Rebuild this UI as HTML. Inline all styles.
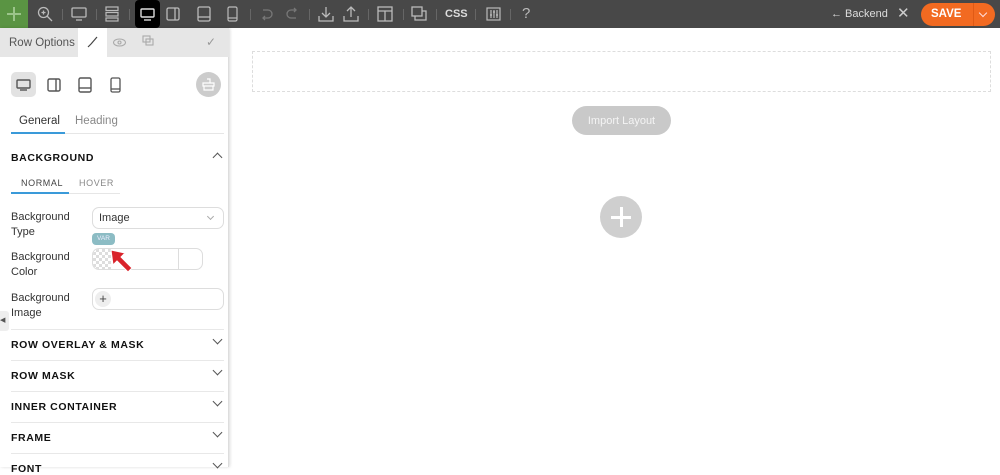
<!DOCTYPE html><html><head><style>
*{box-sizing:border-box;margin:0;padding:0}
body{width:1000px;height:467px;overflow:hidden;background:#fff;font-family:"Liberation Sans",Arial,sans-serif;position:relative}
.tb{position:absolute;left:0;top:0;width:1000px;height:28px;background:#484848}
.ab{position:absolute}
.sep{position:absolute;top:9px;width:1px;height:11px;background:#666}
.panel{position:absolute;left:0;top:28px;width:229px;height:439px;background:#fff;border-right:1px solid #ddd;box-shadow:1px 0 3px rgba(0,0,0,.15)}
.t{position:absolute;font-size:11px;color:#333}
.h{position:absolute;left:11px;font-size:10.5px;font-weight:bold;letter-spacing:.6px;color:#111}
.ln{position:absolute;left:11px;width:213px;height:1px;background:#e8e8e8}
.chev{position:absolute;left:214px;width:7px;height:7px;border-right:1.3px solid #555;border-bottom:1.3px solid #555;transform:rotate(45deg)}
</style></head><body>
<div class="tb">
<div class="ab" style="left:0;top:0;width:28px;height:28px;background:#5a9443"></div>
<div class="ab" style="left:13px;top:7px;width:1.5px;height:14px;background:#9bc48a"></div>
<div class="ab" style="left:7px;top:13px;width:14px;height:1.5px;background:#9bc48a"></div>
<svg class="ab" style="left:37px;top:6px" width="16" height="16" fill="none" stroke="#bbb" stroke-width="1.3"><circle cx="6.5" cy="6.5" r="5"/><path d="M10 10l5 5M4.5 6.5h4M6.5 4.5v4"/></svg>
<div class="sep" style="left:62px"></div>
<svg class="ab" style="left:71px;top:7px" width="16" height="14" fill="none" stroke="#bbb" stroke-width="1.3"><rect x="1" y="1" width="14" height="9" rx="1"/><path d="M5 13h6"/></svg>
<div class="sep" style="left:96px"></div>
<svg class="ab" style="left:105px;top:6px" width="14" height="16" fill="none" stroke="#bbb" stroke-width="1.2"><rect x="1" y="1" width="12" height="3.5"/><rect x="1" y="6.5" width="12" height="3.5"/><rect x="1" y="12" width="12" height="3"/></svg>
<div class="sep" style="left:129px"></div>
<div class="ab" style="left:135px;top:0;width:25px;height:28px;background:#000;border-radius:4px"></div>
<svg class="ab" style="left:140px;top:8px" width="15" height="13" fill="none" stroke="#ddd" stroke-width="1.4"><rect x="1" y="1" width="13" height="8" rx="1"/><path d="M4 12h7"/></svg>
<svg class="ab" style="left:166px;top:7px" width="14" height="14" fill="none" stroke="#bbb" stroke-width="1.3"><rect x="1" y="1" width="12" height="12" rx="1.5"/><path d="M9 1v12"/></svg>
<svg class="ab" style="left:197px;top:6px" width="14" height="16" fill="none" stroke="#bbb" stroke-width="1.3"><rect x="1" y="1" width="12" height="14" rx="1.5"/><path d="M1 11h12"/></svg>
<svg class="ab" style="left:227px;top:6px" width="11" height="16" fill="none" stroke="#bbb" stroke-width="1.2"><rect x="1" y="1" width="9" height="14" rx="1.5"/><path d="M1 12h9"/></svg>
<div class="sep" style="left:250px"></div>
<svg class="ab" style="left:259px;top:7px" width="14" height="14" fill="none" stroke="#777" stroke-width="1.3"><path d="M4 3h5a4 4 0 010 8H4M6 9l-2 2 2 2"/></svg>
<svg class="ab" style="left:285px;top:7px" width="14" height="14" fill="none" stroke="#777" stroke-width="1.3"><path d="M10 3H6a4 4 0 000 8h5M9 1l2 2-2 2"/></svg>
<div class="sep" style="left:309px"></div>
<svg class="ab" style="left:318px;top:6px" width="16" height="16" fill="none" stroke="#bbb" stroke-width="1.3"><path d="M8 1v10M4 7l4 4 4-4M1 10v5h14v-5"/></svg>
<svg class="ab" style="left:343px;top:6px" width="16" height="16" fill="none" stroke="#bbb" stroke-width="1.3"><path d="M8 11V1M4 5l4-4 4 4M1 10v5h14v-5"/></svg>
<div class="sep" style="left:368px"></div>
<svg class="ab" style="left:377px;top:6px" width="16" height="16" fill="none" stroke="#bbb" stroke-width="1.3"><rect x="1" y="1" width="14" height="14"/><path d="M1 5h14M8 5v10"/></svg>
<div class="sep" style="left:403px"></div>
<svg class="ab" style="left:411px;top:6px" width="16" height="16" fill="none" stroke="#bbb" stroke-width="1.3"><rect x="1" y="1" width="10" height="9"/><path d="M4 10v4h11V5h-4"/></svg>
<div class="sep" style="left:436px"></div>
<div class="ab" style="left:445px;top:8px;color:#ddd;font-size:11px;font-weight:bold">CSS</div>
<div class="sep" style="left:475px"></div>
<svg class="ab" style="left:486px;top:7px" width="15" height="14" fill="none" stroke="#bbb" stroke-width="1.2"><rect x="1" y="1" width="13" height="12"/><path d="M5 3v8M8 3v8M11 3v8M4 8h2M7 5h2M10 8h2"/></svg>
<div class="sep" style="left:510px"></div>
<div class="ab" style="left:522px;top:5px;color:#bbb;font-size:15px">?</div>
<div class="ab" style="left:831px;top:8px;color:#ddd;font-size:11px">← Backend</div>
<div class="ab" style="left:897px;top:4px;color:#ccc;font-size:15px">✕</div>
<div class="ab" style="left:921px;top:3px;width:74px;height:23px;background:#f26a21;border-radius:12px"></div>
<div class="ab" style="left:931px;top:8px;color:#fff;font-size:11.5px;font-weight:bold">SAVE</div>
<div class="ab" style="left:973px;top:3px;width:1px;height:23px;background:#e05a15"></div>
<div class="ab" style="left:980px;top:10px;width:6px;height:6px;border-right:1.2px solid #fdd;border-bottom:1.2px solid #fdd;transform:rotate(45deg)"></div>
</div>

<div class="ab" style="left:252px;top:51px;width:739px;height:41px;border:1px dashed #ddd"></div>
<div class="ab" style="left:572px;top:106px;width:99px;height:29px;background:#c9c9c9;border-radius:15px;color:#f4f4f4;font-size:11px;text-align:center;line-height:30px">Import Layout</div>
<div class="ab" style="left:600px;top:196px;width:42px;height:42px;background:#cfcfcf;border-radius:50%"></div>
<div class="ab" style="left:611px;top:216px;width:20px;height:3px;background:#fff"></div>
<div class="ab" style="left:619.5px;top:207px;width:3px;height:20px;background:#fff"></div>

<div class="panel">
<div class="ab" style="left:0;top:0;width:229px;height:29px;background:#e6e6e6"></div>
<div class="ab" style="left:78px;top:0;width:29px;height:29px;background:#fff"></div>
<div class="t" style="left:9px;top:9px;color:#555;font-size:11.5px">Row Options</div>
<svg class="ab" style="left:86px;top:8px" width="12" height="12" fill="none" stroke="#444" stroke-width="1.2"><path d="M11 1L5 8M5 8l-3 3"/></svg>
<svg class="ab" style="left:113px;top:10px" width="13" height="9" fill="none" stroke="#aaa" stroke-width="1.1"><ellipse cx="6.5" cy="4.5" rx="6" ry="3.5"/><circle cx="6.5" cy="4.5" r="1.5"/></svg>
<svg class="ab" style="left:142px;top:7px" width="12" height="11" fill="none" stroke="#aaa" stroke-width="1.1"><rect x="1" y="1" width="7" height="6"/><rect x="4" y="4" width="7" height="6"/></svg>
<div class="t" style="left:206px;top:7px;color:#999;font-size:12px">✓</div>
<div class="ab" style="left:11px;top:44px;width:25px;height:25px;background:#e2e2e2;border-radius:5px"></div>
<svg class="ab" style="left:16px;top:51px" width="15" height="12" fill="none" stroke="#555" stroke-width="1.4"><rect x="1" y="1" width="13" height="8" rx="1"/><path d="M4 11h7"/></svg>
<svg class="ab" style="left:47px;top:50px" width="14" height="14" fill="none" stroke="#555" stroke-width="1.4"><rect x="1" y="1" width="12" height="12" rx="1.5"/><path d="M9 1v12"/></svg>
<svg class="ab" style="left:78px;top:49px" width="14" height="16" fill="none" stroke="#555" stroke-width="1.4"><rect x="1" y="1" width="12" height="14" rx="1.5"/><path d="M1 11h12"/></svg>
<svg class="ab" style="left:110px;top:49px" width="11" height="16" fill="none" stroke="#555" stroke-width="1.3"><rect x="1" y="1" width="9" height="14" rx="1.5"/><path d="M1 12h9"/></svg>
<div class="ab" style="left:196px;top:44px;width:25px;height:25px;background:#ccc;border-radius:50%"></div>
<svg class="ab" style="left:202px;top:50px" width="13" height="13" fill="none" stroke="#fff" stroke-width="1.2"><path d="M5 1h3v4M1 5h11v3H1zM2 8v4h9V8"/></svg>
<div class="t" style="left:19px;top:87px;font-size:11.5px;color:#333">General</div>
<div class="t" style="left:75px;top:87px;font-size:11.5px;color:#888">Heading</div>
<div class="ab" style="left:11px;top:105px;width:213px;height:1px;background:#e6e6e6"></div>
<div class="ab" style="left:11px;top:104px;width:54px;height:2px;background:#3a9ad9"></div>
<div class="h" style="top:124px">BACKGROUND</div>
<div class="chev" style="top:126px;transform:rotate(-135deg)"></div>
<div class="t" style="left:21px;top:150px;font-size:9px;letter-spacing:.6px;color:#444">NORMAL</div>
<div class="t" style="left:79px;top:150px;font-size:9px;letter-spacing:.6px;color:#888">HOVER</div>
<div class="ab" style="left:11px;top:165px;width:109px;height:1px;background:#e6e6e6"></div>
<div class="ab" style="left:11px;top:164px;width:58px;height:2px;background:#3a9ad9"></div>
<div class="t" style="left:11px;top:182px;line-height:15px">Background<br>Type</div>
<div class="ab" style="left:92px;top:179px;width:132px;height:22px;border:1px solid #ddd;border-radius:7px"></div>
<div class="t" style="left:99px;top:184px">Image</div>
<div class="ab" style="left:208px;top:186px;width:5px;height:5px;border-right:1px solid #aaa;border-bottom:1px solid #aaa;transform:rotate(45deg)"></div>
<div class="ab" style="left:92px;top:205px;width:23px;height:12px;background:#8cbcc4;border-radius:4px;color:#eef;font-size:6.5px;text-align:center;line-height:12px">VAR</div>
<div class="t" style="left:11px;top:222px;line-height:15px">Background<br>Color</div>
<div class="ab" style="left:92px;top:220px;width:111px;height:22px;border:1px solid #ddd;border-radius:7px"></div>
<div class="ab" style="left:178px;top:220px;width:1px;height:22px;background:#ddd"></div>
<div class="ab" style="left:93px;top:221px;width:18px;height:20px;border-radius:6px 0 0 6px;background:repeating-conic-gradient(#ddd 0 25%,#fff 0 50%) 0 0/6px 6px"></div>
<svg class="ab" style="left:108px;top:219px" width="28" height="28"><path d="M3 3l14 3-4 4 11 11-4 4-11-11-4 4z" fill="#d9232b" stroke="#fff" stroke-width="1"/></svg>
<div class="t" style="left:11px;top:263px;line-height:15px">Background<br>Image</div>
<div class="ab" style="left:92px;top:260px;width:132px;height:22px;border:1px solid #ddd;border-radius:7px"></div>
<div class="ab" style="left:95px;top:263px;width:16px;height:16px;border-radius:50%;background:#eee;color:#444;font-size:13px;text-align:center;line-height:15px">+</div>
<div class="ab" style="left:0;top:283px;width:9px;height:20px;background:#eee;border-radius:0 3px 3px 0;color:#555;font-size:7px;line-height:20px">◀</div>
<div class="ln" style="top:301px"></div>
<div class="h" style="top:311px">ROW OVERLAY &amp; MASK</div><div class="chev" style="top:308px"></div>
<div class="ln" style="top:332px"></div>
<div class="h" style="top:342px">ROW MASK</div><div class="chev" style="top:339px"></div>
<div class="ln" style="top:363px"></div>
<div class="h" style="top:373px">INNER CONTAINER</div><div class="chev" style="top:370px"></div>
<div class="ln" style="top:394px"></div>
<div class="h" style="top:404px">FRAME</div><div class="chev" style="top:401px"></div>
<div class="ln" style="top:425px"></div>
<div class="h" style="top:435px">FONT</div><div class="chev" style="top:432px"></div>
</div>
</body></html>
